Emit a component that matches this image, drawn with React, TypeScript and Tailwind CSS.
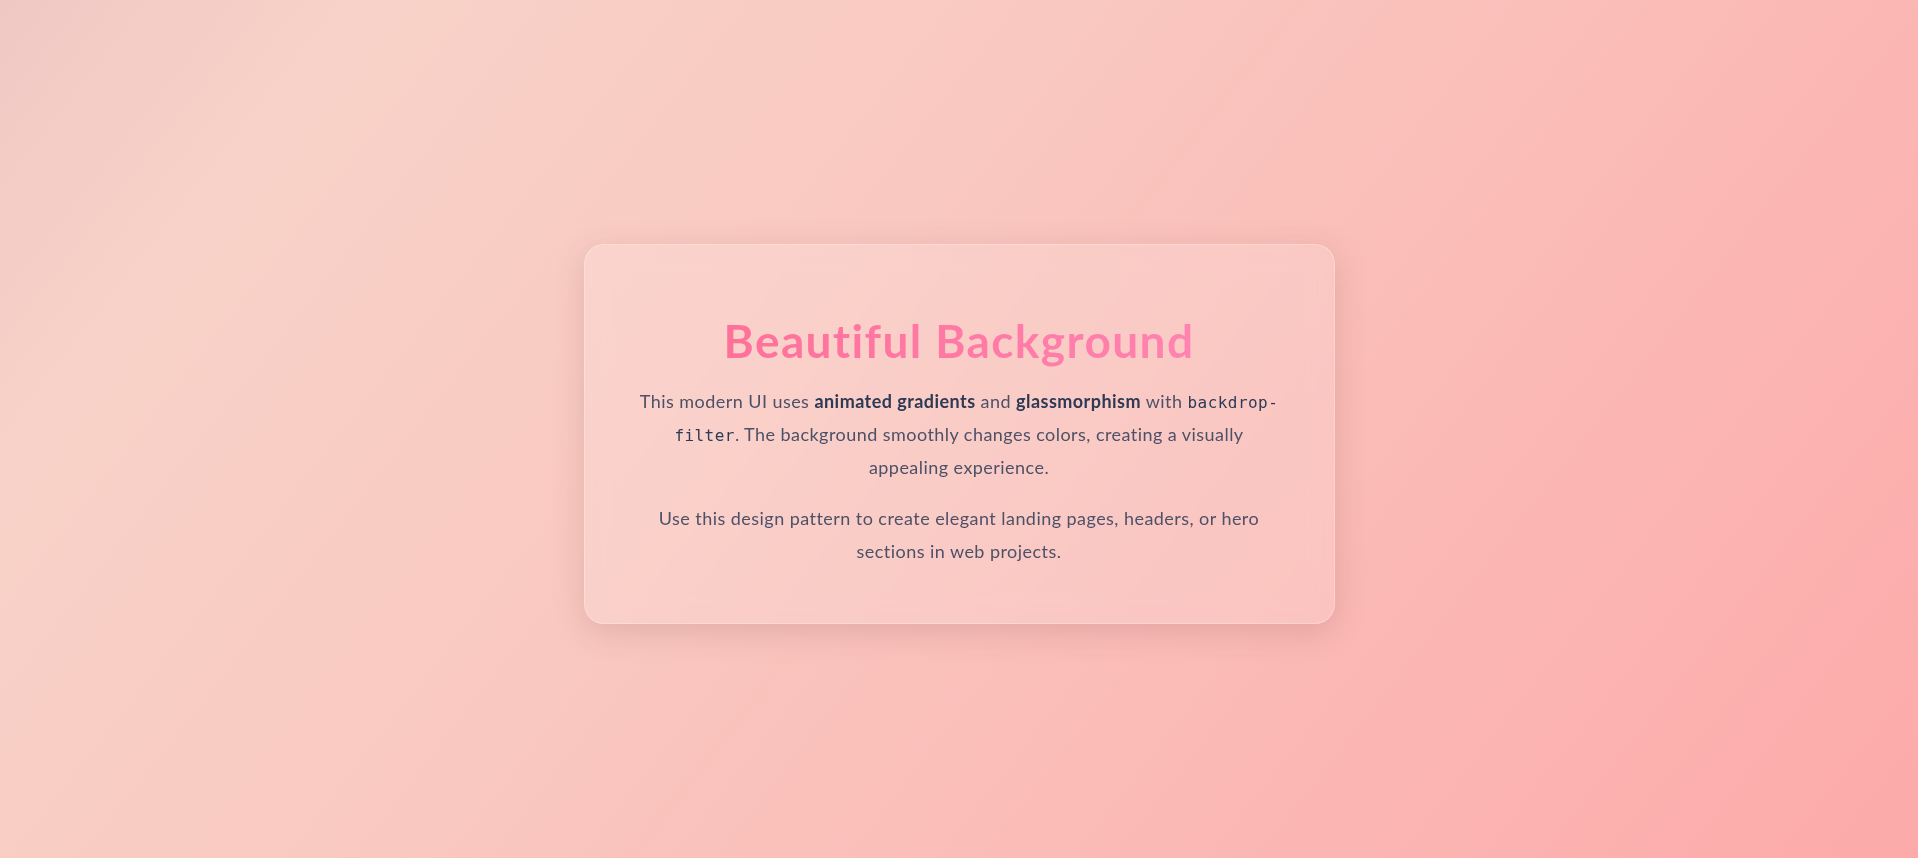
export default function App() {
  return (
    <div className="flex min-h-screen items-center justify-center bg-[linear-gradient(128deg,#efc8c4_0%,#f8d2c8_14%,#f9c9c1_40%,#fbb9b5_70%,#fcaaaa_100%)] pt-[10px] font-['Lato','Liberation_Sans',sans-serif]">
      <div className="w-[751px] rounded-[20px] border border-white/25 bg-white/15 px-12 pt-[68px] pb-[56px] text-center shadow-[0_8px_32px_rgba(120,60,60,0.18)] backdrop-blur-md">
        <h1 className="mb-[17px] bg-[linear-gradient(90deg,#ff6d95,#ff86b4)] bg-clip-text text-[46px] leading-[1.2] font-bold tracking-[1.4px] text-transparent">
          Beautiful Background
        </h1>
        <p className="mb-[19px] text-[18px] leading-[1.8] tracking-[0.45px] text-[#4d5168]">
          This modern UI uses <strong className="font-bold text-[#2c3a55]">animated gradients</strong> and{" "}
          <strong className="font-bold text-[#2c3a55]">glassmorphism</strong> with{" "}
          <code className="font-['DejaVu_Sans_Mono',monospace] text-[16px] text-[#2c3a55]">backdrop-filter</code>. The
          background smoothly changes colors, creating a visually appealing experience.
        </p>
        <p className="text-[18px] leading-[1.8] tracking-[0.45px] text-[#4d5168]">
          Use this design pattern to create elegant landing pages, headers, or hero sections in web projects.
        </p>
      </div>
    </div>
  );
}
